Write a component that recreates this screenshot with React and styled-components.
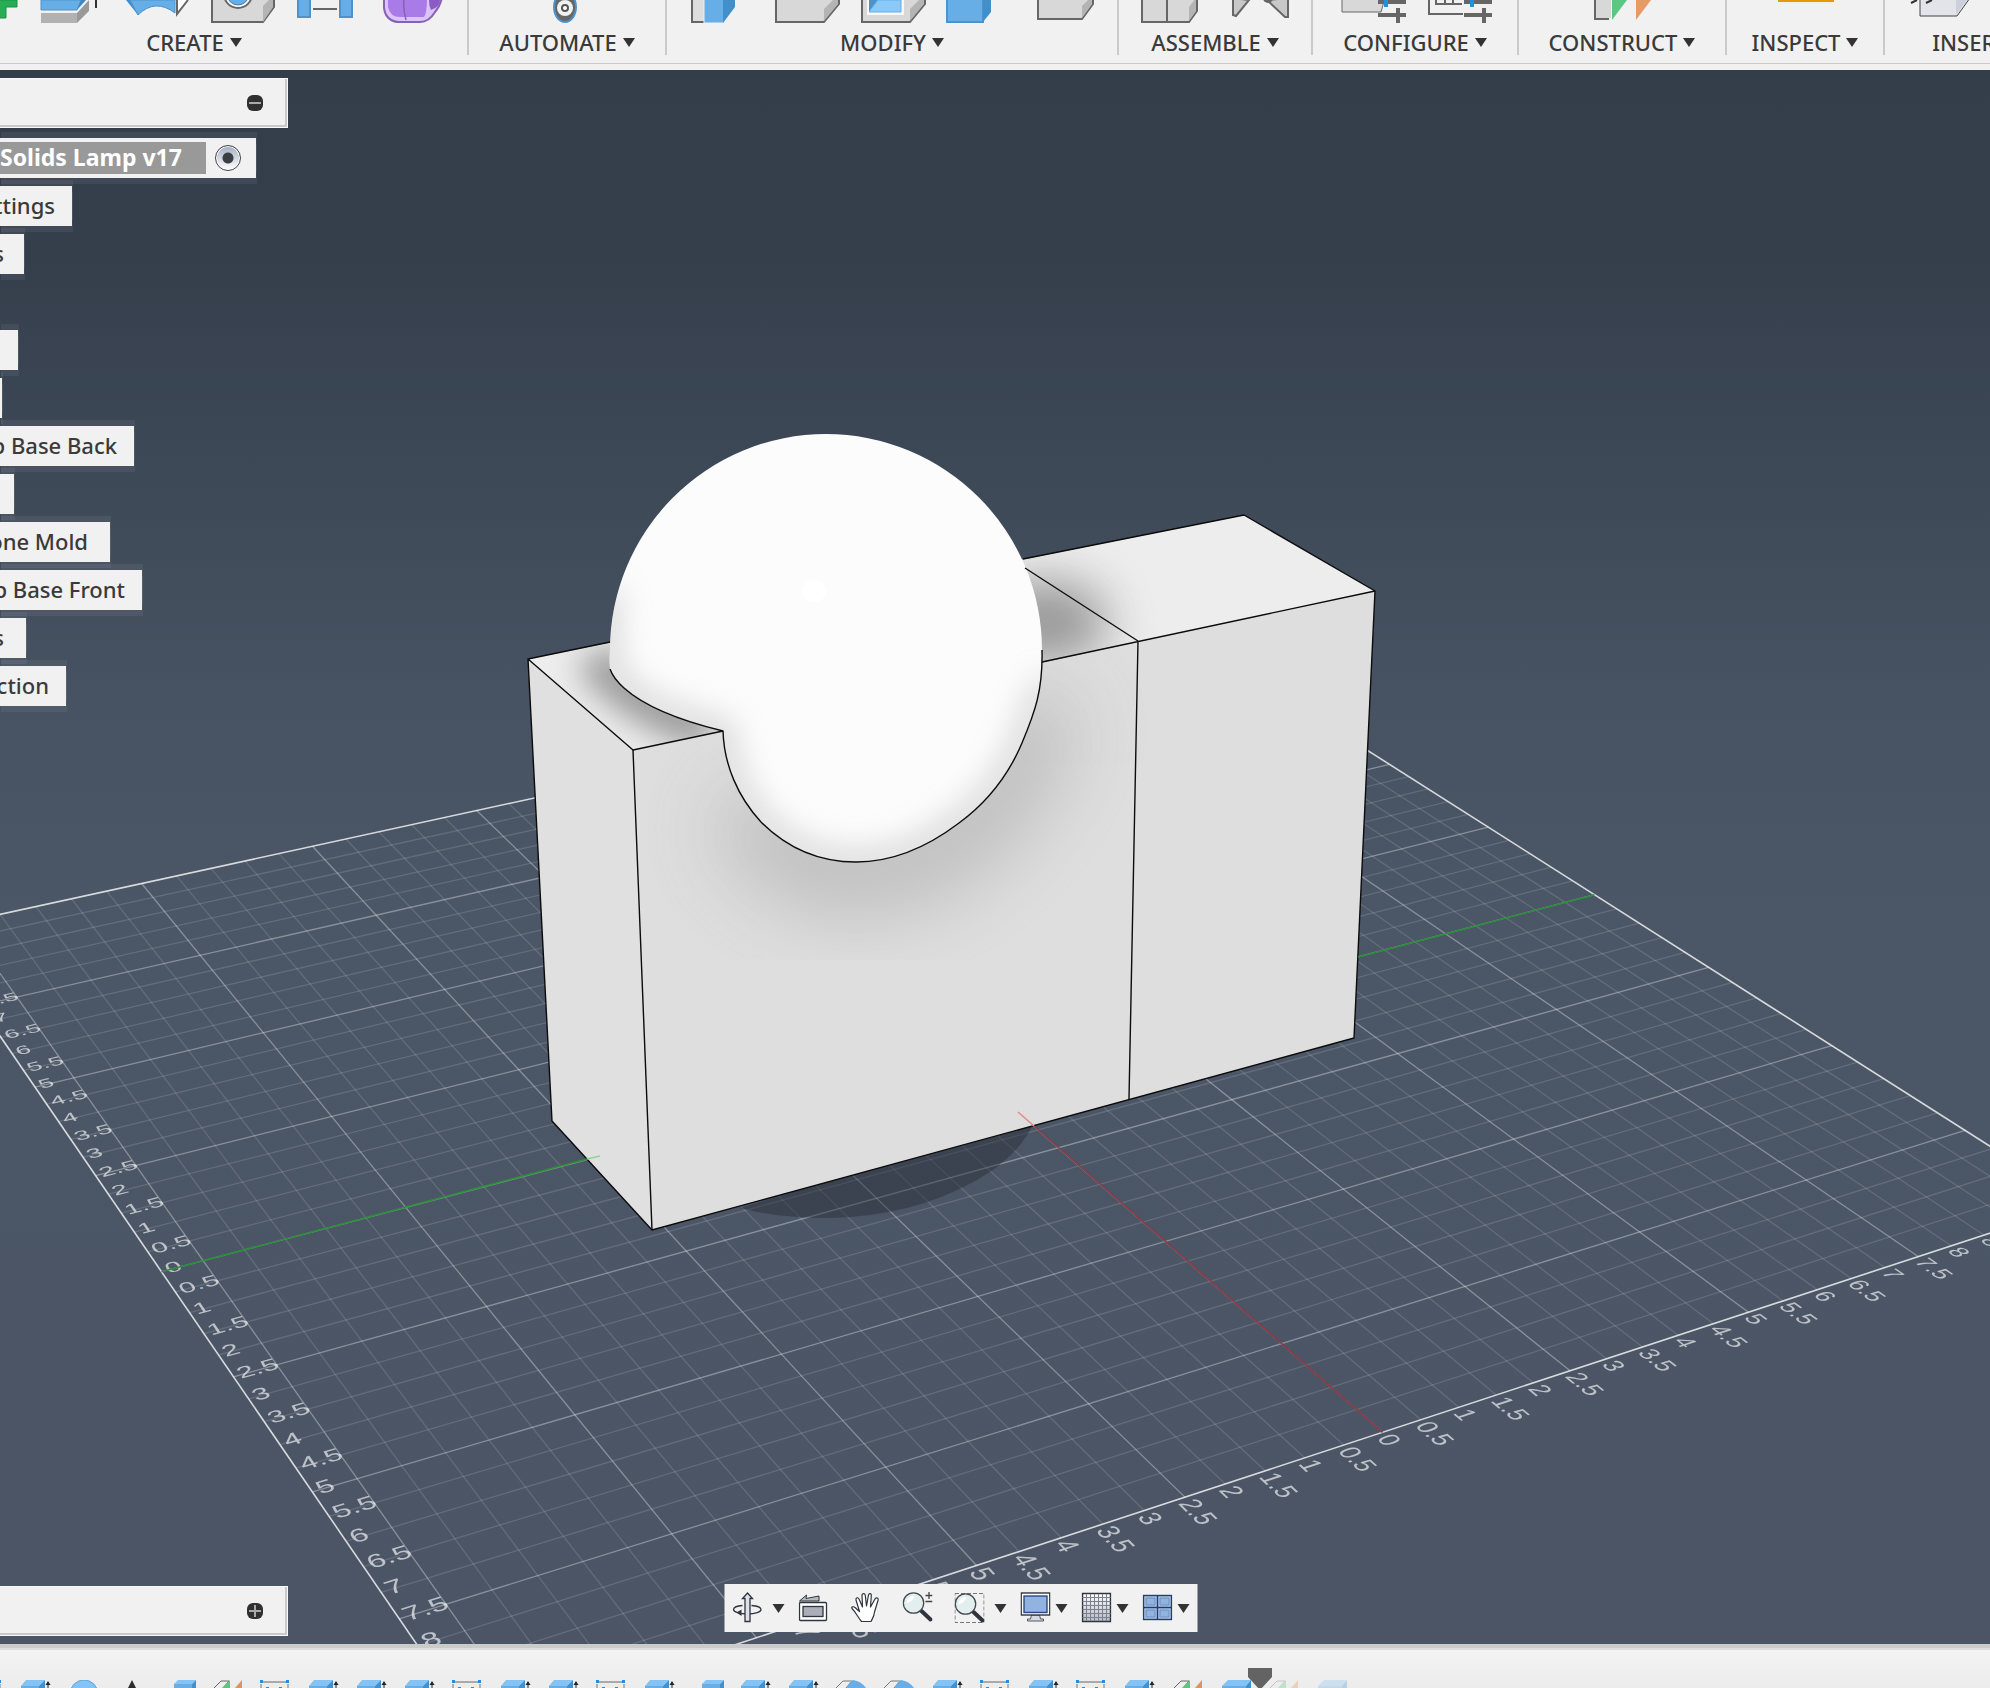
import React from 'react';
import styled, { createGlobalStyle } from 'styled-components';

const GlobalStyle = createGlobalStyle`
  * {
    box-sizing: border-box;
  }

  body {
    margin: 0;
    overflow: hidden;
    font-family: 'Noto Sans', 'Open Sans', sans-serif;
    color: #3a3a3a;
  }

  button {
    margin: 0;
    padding: 0;
    border: none;
    background: none;
    color: inherit;
    font: inherit;
    cursor: pointer;
  }
`;

const Page = styled.div`
  display: flex;
  flex-direction: column;
  height: 100vh;
  background: #f1f1f1;
`;

/* ---------- Toolbar ---------- */

const Toolbar = styled.header`
  flex: none;
  padding-bottom: 6px;
  background: #f1f1f1;
  overflow: hidden;
`;

const ToolbarGroups = styled.div`
  display: flex;
  height: 64px;
  margin-left: -79px;
  border-bottom: 1px solid #cacaca;
`;

const ToolGroup = styled.section`
  flex: none;
  display: flex;
  flex-direction: column;
  align-items: center;
  width: ${({ $width }) => $width}px;
  height: 55px;
  border-right: 2px solid #cacaca;
`;

const ToolIcons = styled.div`
  display: flex;
  height: 27px;

  svg {
    display: block;
  }
`;

const MenuButton = styled.button`
  display: flex;
  align-items: center;
  gap: 6px;
  font-size: 22px;
  font-weight: 500;
  line-height: 30px;
  white-space: nowrap;
`;

const Caret = styled.span`
  width: 0;
  height: 0;
  border: 6px solid transparent;
  border-top: 9px solid #333;
  border-bottom: none;
`;

/* ---------- Workspace ---------- */

const Workspace = styled.main`
  position: relative;
  flex: 1;
  min-height: 0;
  overflow: hidden;
  background: linear-gradient(#343d4a 0%, #353f4c 12%, #3e4958 26%, #475262 40%, #4b5666 54%, #4b5566 100%);
`;

const Scene = styled.svg`
  position: absolute;
  inset: 0;
  width: 100%;
  height: 100%;
`;

const GridLine = styled.line`
  stroke: #fff;
  stroke-width: ${({ $kind }) => ($kind === 'edge' ? 1.6 : 1.3)};
  opacity: ${({ $kind }) => ({ edge: 0.78, major: 0.34, minor: 0.13 })[$kind]};
`;

const GridLabel = styled.text`
  fill: #fff;
  opacity: 0.64;
  font-family: 'Liberation Sans', Arial, sans-serif;
  font-size: 33px;
`;

const Edge = styled.path`
  fill: none;
  stroke: #0c0c0c;
  stroke-width: 1.4;
  stroke-linejoin: round;
`;

const LeftColumn = styled.div`
  position: relative;
  display: flex;
  flex-direction: column;
  justify-content: space-between;
  align-items: flex-start;
  width: 288px;
  height: 100%;
  padding: 8px 0;
`;

const PanelBar = styled.div`
  display: flex;
  align-items: center;
  justify-content: flex-end;
  width: 288px;
  height: 50px;
  padding-right: 23px;
  background: #f1f1f1;
  border: 1px solid #fafafa;
  border-left: none;
  box-shadow: inset -2px -2px 0 #c9c9c9;

  svg {
    display: block;
  }
`;

const Tree = styled.ul`
  display: flex;
  flex-direction: column;
  gap: 8px;
  margin: 10px 0 0;
  padding: 0;
  list-style: none;
`;

const TreeRow = styled.li`
  display: flex;
  align-items: center;
  justify-content: flex-end;
  width: ${({ $width }) => $width}px;
  height: 40px;
  padding-right: ${({ $pad }) => $pad || 17}px;
  padding-bottom: 2px;
  background: ${({ $width }) => ($width ? '#f1f1f1' : 'none')};
  box-shadow: ${({ $width }) =>
    $width ? '1px -6px 0 rgba(255, 255, 255, 0.06), 1px 6px 0 rgba(255, 255, 255, 0.06)' : 'none'};
  font-size: 22px;
  font-weight: 500;
  line-height: 30px;
  white-space: nowrap;
`;

const RootRow = styled(TreeRow)`
  justify-content: space-between;
  padding-bottom: 0;
`;

const RootName = styled.span`
  width: 206px;
  height: 32px;
  background: #999;
  color: #fff;
  font-size: 23px;
  font-weight: 700;
`;

const ActivateRadio = styled.input`
  appearance: none;
  width: 26px;
  height: 26px;
  margin: 0;
  border: 1px solid #444;
  border-radius: 50%;
  background: radial-gradient(circle, #3b3e44 0 5px, transparent 6px), linear-gradient(#a3aec4, #fff);
  box-shadow: inset 0 0 0 1px #fff;
`;

const NavBar = styled.nav`
  position: absolute;
  left: calc(50% - 34px);
  bottom: 12px;
  transform: translateX(-50%);
  display: flex;
  align-items: center;
  gap: 14px;
  height: 48px;
  padding: 0 8px;
  background: #f1f1f1;
`;

const NavItem = styled.div`
  display: flex;
  align-items: center;
  gap: ${({ $gap }) => $gap || 5}px;
  margin: 0 ${({ $after }) => $after || 0}px 0 ${({ $before }) => $before || 0}px;

  svg {
    display: block;
  }
`;

/* ---------- Timeline ---------- */

const Timeline = styled.footer`
  flex: none;
  height: 44px;
  padding-top: 32px;
  border-top: 4px solid #cbcbcb;
  background: linear-gradient(#dedede 2px, #f3f3f3 2px, #ececec);
  overflow: hidden;
`;

const TimelineTrack = styled.div`
  position: relative;
  display: flex;
  margin-left: -36px;

  svg {
    display: block;
  }
`;

const TimelineStep = styled.button`
  flex: none;
  width: 48px;
  opacity: ${({ $faded }) => ($faded ? 0.3 : 1)};
`;

const TimelineMarker = styled.svg`
  position: absolute;
  left: 1284px;
  top: -12px;
`;

/* ---------- Toolbar icons (their lower halves) ---------- */

const toolIcons = {
  plus: (
    <path d="M40 0h41v7h-11v11h-12v-11h-18z" fill="#27ae55" stroke="#1d9146" />
  ),
  extrude: (
    <>
      <path d="M19 13h36v10h-36z" fill="#b1b1b1" />
      <path d="M55 23l12-12v-11l-12 13z" fill="#999" />
      <path d="M19 0h40l-4 10h-36z" fill="#67aee6" stroke="#4a93cf" />
      <path d="M55 10l9-10h-5z" fill="#3f87c1" />
      <path d="M74 0v8" stroke="#333" strokeWidth="2" />
    </>
  ),
  revolve: (
    <>
      <path d="M18 0h12v15z" fill="#4190cc" />
      <path d="M22 0h45v13q-20-15-37 2z" fill="#67aee6" stroke="#4a93cf" />
      <path d="M69 0v14l11-14" fill="#fff" stroke="#666" strokeWidth="2" />
    </>
  ),
  hole: (
    <>
      <path d="M18 -4h62v11l-11 15h-51z" fill="#d8d8d8" stroke="#666" strokeWidth="2" />
      <path d="M69 22v-16l10-10v11z" fill="#b4b4b4" />
      <circle cx="44" cy="-6" r="14" fill="#fff" stroke="#666" strokeWidth="2" />
      <circle cx="44" cy="-6" r="11" fill="#67aee6" stroke="#3a80b8" />
    </>
  ),
  pattern: (
    <>
      <path d="M18 -2h12v19h-12zM60 -2h12v19h-12z" fill="#67aee6" stroke="#4a93cf" strokeWidth="2" />
      <path d="M33 9h24" stroke="#666" strokeWidth="2" />
    </>
  ),
  form: (
    <>
      <path d="M18 -4v12q2 14 16 14h20q9 0 15-10q6-7 7-16z" fill="#dcc4fb" stroke="#8661b5" strokeWidth="2" />
      <path d="M22 -2v9q2 10 12 10h24q3-4 3-19z" fill="#a97be6" />
      <path d="M38 -2q-1 12 2 22" fill="none" stroke="#8661b5" strokeWidth="1.5" />
      <path d="M63 0q0 6 2 10q9-3 9-10z" fill="#8a5cc4" />
    </>
  ),
  automate: (
    <>
      <ellipse cx="41" cy="7" rx="11" ry="15" fill="#666" stroke="#4a93cf" strokeWidth="2" />
      <circle cx="41" cy="8" r="8" fill="#f1f1f1" />
      <circle cx="41" cy="8" r="3" fill="#fff" stroke="#555" strokeWidth="2" />
    </>
  ),
  press: (
    <>
      <path d="M15 -2h13v24h-13z" fill="#ddd" stroke="#666" strokeWidth="2" />
      <path d="M27 -2h20v25h-20z" fill="#67aee6" stroke="#f1f1f1" />
      <path d="M46 23l12-16v-7h-12z" fill="#4190cc" />
    </>
  ),
  fillet: (
    <>
      <path d="M13 -4h63v8l-15 18h-48z" fill="#d8d8d8" stroke="#666" strokeWidth="2" />
      <path d="M61 21v-12l12-12h2v7z" fill="#b4b4b4" />
    </>
  ),
  shell: (
    <>
      <path d="M13 -4h63v8l-15 18h-48z" fill="#d8d8d8" stroke="#666" strokeWidth="2" />
      <path d="M61 21v-12l12-12h2v7z" fill="#b4b4b4" />
      <path d="M18 0h37v15h-37z" fill="#f8f8f8" />
      <path d="M20 0v12l9-12z" fill="#4a93cf" />
      <path d="M20 12l9-12h23v12z" fill="#8bcaf8" stroke="#67aee6" />
    </>
  ),
  combine: (
    <>
      <path d="M12 -2h36v24h-36z" fill="#67aee6" stroke="#4a93cf" strokeWidth="2" />
      <path d="M48 22l8-10v-12h-8z" fill="#4190cc" />
    </>
  ),
  scale: (
    <>
      <path d="M17 -4h55v8l-11 15h-44z" fill="#d8d8d8" stroke="#666" strokeWidth="2" />
      <path d="M61 18v-12l8-8h2v6z" fill="#b4b4b4" />
    </>
  ),
  joint: (
    <>
      <path d="M13 -4h55v15l-8 11h-47z" fill="#d8d8d8" stroke="#666" strokeWidth="2" />
      <path d="M60 21v-14l7-9v13z" fill="#b4b4b4" />
      <path d="M38 0v22" stroke="#666" strokeWidth="2" />
    </>
  ),
  asBuilt: (
    <>
      <path d="M18 -2v17l3 1l13-16z" fill="#c8c8c8" stroke="#666" strokeWidth="2" />
      <path d="M52 0l18 17h3v-19z" fill="#c8c8c8" stroke="#666" strokeWidth="2" />
      <circle cx="53" cy="-2" r="5" fill="#666" />
    </>
  ),
  configure: (
    <>
      <path d="M13 -2h43l-4 14h-39z" fill="#d8d8d8" stroke="#666" strokeWidth="1" />
      <path d="M49 2h28M49 15h28M69 8v15M57 0v3" stroke="#666" strokeWidth="4" />
      <path d="M57 0v7" stroke="#1f8fe0" strokeWidth="4" />
    </>
  ),
  configTable: (
    <>
      <path d="M14 0v14h34M21 0v4h26M30 0v4M38 0v4" fill="none" stroke="#666" strokeWidth="2" />
      <path d="M49 2h28M49 15h28M69 8v15" stroke="#666" strokeWidth="4" />
      <path d="M57 0v7" stroke="#1f8fe0" strokeWidth="4" />
    </>
  ),
  plane: (
    <>
      <path d="M16 -2v21h14" fill="#d8d8d8" stroke="#666" strokeWidth="2" />
      <path d="M18 0h14v18h-14z" fill="#d8d8d8" />
      <path d="M33 0h15l-15 20z" fill="#5cc783" />
      <path d="M57 0h15l-15 20z" fill="#e69a66" />
    </>
  ),
  measure: <path d="M16 0h56v2h-56z" fill="#e59a05" />,
  insert: (
    <>
      <path d="M27 -2h50l-13 18h-37z" fill="#e2e4e9" stroke="#444" />
      <path d="M63 0v15l11-15z" fill="#ccd0dc" />
      <path d="M18 3l6-3M33 3l6-3" stroke="#333" strokeWidth="2" />
    </>
  ),
  derive: null,
};

const toolGroups = [
  { name: 'CREATE', width: 548, icons: ['plus', 'extrude', 'revolve', 'hole', 'pattern', 'form'] },
  { name: 'AUTOMATE', width: 198, icons: ['automate'] },
  { name: 'MODIFY', width: 452, icons: ['press', 'fillet', 'shell', 'combine', 'scale'] },
  { name: 'ASSEMBLE', width: 194, icons: ['joint', 'asBuilt'] },
  { name: 'CONFIGURE', width: 206, icons: ['configure', 'configTable'] },
  { name: 'CONSTRUCT', width: 208, icons: ['plane'] },
  { name: 'INSPECT', width: 158, icons: ['measure'] },
  { name: 'INSERT', width: 190, icons: ['insert', 'derive'] },
];

const ToolbarSection = ({ name, width, icons }) => (
  <ToolGroup $width={width}>
    <ToolIcons>
      {icons.map((icon) => (
        <button key={icon} aria-label={icon}>
          <svg width="86" height="27" viewBox="0 0 86 27">
            {toolIcons[icon]}
          </svg>
        </button>
      ))}
    </ToolIcons>
    <MenuButton>
      {name}
      <Caret />
    </MenuButton>
  </ToolGroup>
);

/* ---------- Ground grid ---------- */

// Ground plane (u right, v towards the viewer) to screen.
const depth = (u, v) => 1 + 0.0088 * u - 0.01597 * v;

const project = (u, v) => {
  const w = depth(u, v);
  return [(77.47 * u + 22.4 * v + 960) / w, (-8.82 * u + 16.15 * v + 1061.6) / w];
};

// Text matrix for a label that lies flat on the ground, baseline along "axis".
const flatMatrix = (u, v, axis) => {
  const w = depth(u, v);
  const [x, y] = project(u, v);
  const du = [(77.47 - 0.0088 * x) / w / 100, (-8.82 - 0.0088 * y) / w / 100];
  const dv = [(22.4 + 0.01597 * x) / w / 100, (16.15 + 0.01597 * y) / w / 100];
  const m = axis === 'u' ? [...du, ...dv] : [...dv, -du[0], -du[1]];
  return `matrix(${m.join(' ')} ${x} ${y})`;
};

const U_MIN = -10.5;
const U_MAX = 10;
const V_MIN = -10;
const V_MAX = 9.5;

const steps = (from, to) => Array.from({ length: (to - from) * 2 + 1 }, (_, i) => from + i / 2);

const lineKind = (n, min, max) => {
  if (n === min || n === max) return 'edge';
  return n % 2.5 === 0 ? 'major' : 'minor';
};

const GroundLine = ({ from, to, kind }) => {
  const [x1, y1] = project(...from);
  const [x2, y2] = project(...to);
  return <GridLine x1={x1} y1={y1} x2={x2} y2={y2} $kind={kind} />;
};

const Ground = () => (
  <g>
    {steps(U_MIN, U_MAX).map((u) => (
      <GroundLine key={`u${u}`} from={[u, V_MIN]} to={[u, V_MAX]} kind={lineKind(u, U_MIN, U_MAX)} />
    ))}
    {steps(V_MIN, V_MAX).map((v) => (
      <GroundLine key={`v${v}`} from={[U_MIN, v]} to={[U_MAX, v]} kind={lineKind(v, V_MIN, V_MAX)} />
    ))}
    {steps(-8.5, 8).map((v) => (
      <GridLabel key={`lv${v}`} transform={flatMatrix(U_MIN + 0.06, v + 0.08, 'u')}>
        {Math.abs(v)}
      </GridLabel>
    ))}
    {steps(-7, 8.5).map((u) => (
      <GridLabel key={`lu${u}`} transform={flatMatrix(u - 0.13, V_MAX + 0.06, 'v')}>
        {Math.abs(u)}
      </GridLabel>
    ))}
  </g>
);

/* ---------- Model ---------- */

const bulbTop = 'M610 669 Q609 660 610 650 A216 216 0 0 1 1042 650';
const bulbSide =
  'C1043 690 1035 712 1022 743 C1008 776 985 804 959 823 C930 845 895 862 856 862 C815 862 785 846 761 822 C738 797 724 765 723 731';
const bulbSeat = 'Q653 714 624 688 Q613 678 610 669';

const Model = () => (
  <g>
    <path d="M740 1208 Q790 1221 850 1217 Q930 1211 990 1172 Q1022 1150 1034 1122 L900 1160Z" fill="#262c33" opacity="0.45" />

    <path d="M528 659 L633 750 L652 1230 L552 1121Z" fill="#e0e0e0" />
    <path d="M528 659 L1244 515 L1375 591 L633 750Z" fill="#ededed" />
    <path d="M633 750 L1375 591 L1354 1038 L652 1230Z" fill="#dedede" />

    <g clipPath="url(#frontFace)">
      <path
        d="M745 800 Q790 880 860 872 Q930 872 990 805 Q1020 770 1040 700"
        fill="none"
        stroke="#8c8c8c"
        strokeWidth="76"
        opacity="0.44"
        filter="url(#wideBlur)"
      />
    </g>
    <g clipPath="url(#topFace)">
      <path
        d="M594 655 Q630 706 712 730"
        fill="none"
        stroke="#777"
        strokeWidth="42"
        opacity="0.72"
        filter="url(#softBlur)"
      />
      <ellipse cx="1046" cy="622" rx="62" ry="42" fill="#777" opacity="0.72" filter="url(#midBlur)" />
    </g>

    <path d={`${bulbTop} ${bulbSide} ${bulbSeat}Z`} fill="#fcfcfc" />
    <g clipPath="url(#bulb)">
      <path
        d={`M1046 680 ${bulbSide} ${bulbSeat} Q604 620 610 590`}
        fill="none"
        stroke="#9a9a9a"
        strokeWidth="18"
        opacity="0.5"
        filter="url(#softBlur)"
      />
    </g>
    <ellipse cx="814" cy="591" rx="12" ry="11" fill="#fff" />

    <Edge d={`M1042 650 ${bulbSide} ${bulbSeat}`} />
    <Edge d="M610 642 L528 659 L633 750 L723 731 M528 659 L552 1121 L652 1230 L1354 1038 L1375 591 L1244 515 L1023 559" />
    <Edge d="M633 750 L652 1230 M1025 568 L1138 641 L1129 1099 M1042 662 L1375 591" />
  </g>
);

const Axes = () => {
  const [leftX, leftY] = project(U_MIN, 0);
  const [rightX, rightY] = project(U_MAX, 0);
  const [nearX, nearY] = project(0, V_MAX);
  return (
    <g fill="none" strokeWidth="1.6">
      <path d={`M${leftX} ${leftY} L587 1159 M1358 957 L${rightX} ${rightY}`} stroke="#279036" />
      <path d="M587 1159 L600 1156" stroke="#8fd39a" />
      <path d={`M1034 1126 L${nearX} ${nearY}`} stroke="#8a3843" />
      <path d="M1018 1112 L1034 1126" stroke="#e38c8c" />
    </g>
  );
};

const Viewport = () => (
  <Scene viewBox="0 70 1990 1574" preserveAspectRatio="xMinYMin slice" role="img" aria-label="3D model">
    <defs>
      <filter id="wideBlur" x="-50%" y="-50%" width="200%" height="200%">
        <feGaussianBlur stdDeviation="40" />
      </filter>
      <filter id="midBlur" x="-80%" y="-80%" width="260%" height="260%">
        <feGaussianBlur stdDeviation="24" />
      </filter>
      <filter id="softBlur" x="-50%" y="-50%" width="200%" height="200%">
        <feGaussianBlur stdDeviation="16" />
      </filter>
      <clipPath id="frontFace">
        <path d="M633 750 L1375 591 L1354 1038 L652 1230Z" />
      </clipPath>
      <clipPath id="topFace">
        <path d="M528 659 L1244 515 L1375 591 L633 750Z" />
      </clipPath>
      <clipPath id="bulb">
        <path d={`${bulbTop} ${bulbSide} ${bulbSeat}Z`} />
      </clipPath>
    </defs>
    <Ground />
    <Model />
    <Axes />
  </Scene>
);

/* ---------- Browser tree ---------- */

const treeRows = [
  { id: 'settings', label: 'ttings', width: 72 },
  { id: 'views', label: 's', width: 24, pad: 20 },
  { id: 'spacer', width: 0 },
  { id: 'bodyA', width: 18 },
  { id: 'bodyB', width: 2 },
  { id: 'back', label: 'p Base Back', width: 134 },
  { id: 'bodyC', width: 14 },
  { id: 'mold', label: 'one Mold', width: 110, pad: 22 },
  { id: 'front', label: 'p Base Front', width: 142 },
  { id: 'sketches', label: 's', width: 26, pad: 22 },
  { id: 'construction', label: 'ction', width: 66 },
];

const ToggleIcon = ({ open }) => (
  <svg width="18" height="18" viewBox="0 0 18 18">
    <rect x="1" y="1" width="16" height="16" rx="6" fill="#303030" />
    <path d={open ? 'M3 9h12' : 'M3 9h12M9 3v12'} stroke="#aaa" strokeWidth="2" />
  </svg>
);

/* ---------- Navigation bar ---------- */

const OrbitIcon = () => (
  <svg width="30" height="32" viewBox="0 0 30 32" fill="none" stroke="#30343f" strokeWidth="1.3">
    <path d="M10 13.500C4 14 1 15.500 1 17.500C1 20 7 22 15 22S28.500 20 28.500 17.500C28.500 15.500 25 14 19 13.500" />
    <path d="M15 1L20 6.500H17.500V29.500H12.500V6.500H10Z" fill="#dfe2e8" />
    <path d="M4 20.500L9 17.500V24Z" fill="#30343f" stroke="none" />
  </svg>
);

const LookAtIcon = () => (
  <svg width="30" height="32" viewBox="0 0 30 32" stroke="#30343f">
    <path d="M1 9L8 3L7.500 6.500L20.500 4V9Z" fill="#b6bac2" />
    <rect x="1" y="10.500" width="27" height="18" rx="1" fill="#fff" strokeWidth="1.300" />
    <rect x="4.500" y="14.500" width="20" height="10" fill="#a9aeb8" strokeWidth="1.300" />
  </svg>
);

const HandIcon = () => (
  <svg width="30" height="32" viewBox="0 0 30 32">
    <path
      d="M11 29.500C7 25 6 21 1.500 16.500C0.500 15 2.500 14 4.500 15.500L9 19.500L5.500 8C5 5.500 7.500 5 8.500 7L12 15L11.500 3.500C11.500 1 14.500 1 14.800 3.500L16 14L18 3C18.500 0.800 21 1.300 20.800 3.500L20 15L24.500 7C26 5 28.500 6 27.500 8.500L24 20C23.500 25 22 26 20.500 29.500Z"
      fill="#fff"
      stroke="#30343f"
      strokeWidth="1.200"
      strokeLinejoin="round"
    />
  </svg>
);

const Lens = ({ cy }) => (
  <>
    <path d={`M19 ${cy + 8}L28 ${cy + 16.5}`} stroke="#30343f" strokeWidth="4" strokeLinecap="round" />
    <circle cx="11" cy={cy} r="10.200" fill="#e3efef" stroke="#444a52" strokeWidth="1.300" />
    <path d={`M4 ${cy}A7 7 0 0 1 12 ${cy - 7}Q10 ${cy - 1} 4 ${cy}`} fill="#fff" />
  </>
);

const ZoomIcon = () => (
  <svg width="30" height="32" viewBox="0 0 30 32">
    <Lens cy={11} />
    <path d="M23 3.500h7M26.500 0v7M23 9.500h7" stroke="#444" strokeWidth="1.300" />
  </svg>
);

const ZoomWindowIcon = () => (
  <svg width="30" height="32" viewBox="0 0 30 32">
    <rect x="0.500" y="1.500" width="29" height="29" fill="none" stroke="#777" strokeDasharray="4 2" />
    <Lens cy={12} />
  </svg>
);

const DisplayIcon = () => (
  <svg width="30" height="32" viewBox="0 0 30 32">
    <path d="M11 23h8l1 4h3v2h-16v-2h3z" fill="#d6d9e2" stroke="#555a66" />
    <rect x="0.700" y="1" width="28.600" height="22" fill="#fff" stroke="#30343f" strokeWidth="1.400" />
    <rect x="3.500" y="4" width="23" height="16.500" fill="#92b2df" stroke="#2b4a80" strokeWidth="1.400" />
  </svg>
);

const GridIcon = () => (
  <svg width="30" height="32" viewBox="0 0 30 32">
    <defs>
      <linearGradient id="gridFill" x1="0" y1="0" x2="0" y2="1">
        <stop offset="0" stopColor="#fff" />
        <stop offset="1" stopColor="#b4b9c8" />
      </linearGradient>
    </defs>
    <rect x="1" y="1.500" width="28" height="28" fill="url(#gridFill)" stroke="#30343f" strokeWidth="1.500" />
    <path
      d="M5 2v27M9 2v27M13 2v27M17 2v27M21 2v27M25 2v27M1 5.500h28M1 9.500h28M1 13.500h28M1 17.500h28M1 21.500h28M1 25.500h28"
      stroke="#7b808c"
    />
  </svg>
);

const ViewportsIcon = () => (
  <svg width="30" height="32" viewBox="0 0 30 32">
    <rect x="1" y="3.500" width="28" height="24" fill="#a9c2e4" stroke="#233d6e" strokeWidth="1.400" />
    <path d="M15 3.500v24M1 15.500h28" stroke="#233d6e" strokeWidth="1.400" />
    <path d="M3.500 6h9v7h-9zM17.500 6h9v7h-9zM3.500 18h9v7h-9zM17.500 18h9v7h-9z" fill="#92b2df" stroke="#6f8fc2" />
  </svg>
);

const navItems = [
  { name: 'Orbit', Icon: OrbitIcon, menu: true, gap: 10 },
  { name: 'Look at', Icon: LookAtIcon },
  { name: 'Pan', Icon: HandIcon, before: 8, after: 8 },
  { name: 'Zoom', Icon: ZoomIcon, after: 8 },
  { name: 'Zoom window', Icon: ZoomWindowIcon, menu: true, gap: 10 },
  { name: 'Display settings', Icon: DisplayIcon, menu: true },
  { name: 'Grid and snaps', Icon: GridIcon, menu: true },
  { name: 'Viewports', Icon: ViewportsIcon, menu: true },
];

/* ---------- Timeline icons (their top edges) ---------- */

const stepIcons = {
  sketch: (
    <>
      <path d="M10 2h26" stroke="#aaa" strokeWidth="2" />
      <path d="M9 4v4M36 4v4" stroke="#777" />
      <path d="M8 0h3v3h-3zM34 0h3v3h-3zM14 7h3v1h-3zM27 7h3v1h-3z" fill="#1f8fe0" />
    </>
  ),
  extrude: (
    <>
      <path d="M9 6l5-6h19l-6 6z" fill="#83c3f5" />
      <path d="M27 8v-2l6-6v8z" fill="#4190cc" />
      <path d="M9 6h18v2h-18z" fill="#67aee6" />
      <path d="M36 1l2.500 4h-5zM35.500 5h1v3h-1z" fill="#222" />
    </>
  ),
  sphere: <circle cx="24" cy="14" r="14" fill="#83c3f5" stroke="#5fa6de" />,
  origin: <path d="M24 0l4 8h-8z" fill="#2c2c2c" />,
  box: (
    <>
      <path d="M18 4l4-4h18l-4 4z" fill="#83c3f5" />
      <path d="M18 4h18v4h-18z" fill="#67aee6" />
      <path d="M36 4l4-4v8h-4z" fill="#4190cc" />
    </>
  ),
  solid: (
    <>
      <path d="M10 6l6-6h23l-5 6z" fill="#83c3f5" />
      <path d="M10 6h24v2h-24z" fill="#67aee6" />
      <path d="M34 8v-2l5-6v8z" fill="#4190cc" />
    </>
  ),
  plane: (
    <>
      <path d="M10 8l7-7h8l-6 7" fill="#eee" stroke="#666" />
      <path d="M18 8l8-8v8z" fill="#5cc783" />
      <path d="M31 8l7-8v8z" fill="#e0935f" />
    </>
  ),
  fillet: (
    <>
      <path d="M8 8l7-7h9l-6 7" fill="#eee" stroke="#777" />
      <path d="M19 8q2-6 6-8q8 1 13 8z" fill="#67aee6" />
    </>
  ),
};

const timelineSteps = [
  'sketch', 'extrude', 'sphere', 'origin', 'box', 'plane', 'sketch', 'extrude', 'extrude', 'extrude',
  'sketch', 'extrude', 'extrude', 'sketch', 'extrude', 'box', 'extrude', 'extrude', 'fillet', 'fillet',
  'extrude', 'sketch', 'extrude', 'sketch', 'extrude', 'plane', 'solid', 'plane', 'solid',
];

const MARKER_STEP = 27;

const App = () => {
  return (
    <Page>
      <GlobalStyle />
      <Toolbar>
        <ToolbarGroups>
          {toolGroups.map((group) => (
            <ToolbarSection key={group.name} {...group} />
          ))}
        </ToolbarGroups>
      </Toolbar>

      <Workspace>
        <Viewport />
        <LeftColumn>
          <div>
            <PanelBar>
              <button aria-label="Collapse browser">
                <ToggleIcon open />
              </button>
            </PanelBar>
            <Tree>
              <RootRow $width={256} $pad={15}>
                <RootName id="root-name">Solids Lamp v17</RootName>
                <ActivateRadio type="radio" name="active" aria-labelledby="root-name" />
              </RootRow>
              {treeRows.map(({ id, label, width, pad }) => (
                <TreeRow key={id} $width={width} $pad={label ? pad : 1}>
                  {label}
                </TreeRow>
              ))}
            </Tree>
          </div>
          <PanelBar>
            <button aria-label="Expand comments">
              <ToggleIcon />
            </button>
          </PanelBar>
        </LeftColumn>

        <NavBar>
          {navItems.map(({ name, Icon, menu, gap, before, after }) => (
            <NavItem key={name} $gap={gap} $before={before} $after={after}>
              <button aria-label={name}>
                <Icon />
              </button>
              {menu && (
                <button aria-label={`${name} options`}>
                  <Caret as="div" />
                </button>
              )}
            </NavItem>
          ))}
        </NavBar>
      </Workspace>

      <Timeline>
        <TimelineTrack>
          {timelineSteps.map((step, i) => (
            <TimelineStep key={i} aria-label={`${step} ${i + 1}`} $faded={i >= MARKER_STEP}>
              <svg width="48" height="8" viewBox="0 0 48 8">
                {stepIcons[step]}
              </svg>
            </TimelineStep>
          ))}
          <TimelineMarker width="24" height="22" viewBox="0 0 24 22">
            <path d="M0 0h24v9l-12 13l-12-13z" fill="#636363" />
          </TimelineMarker>
        </TimelineTrack>
      </Timeline>
    </Page>
  );
};

export default App;
